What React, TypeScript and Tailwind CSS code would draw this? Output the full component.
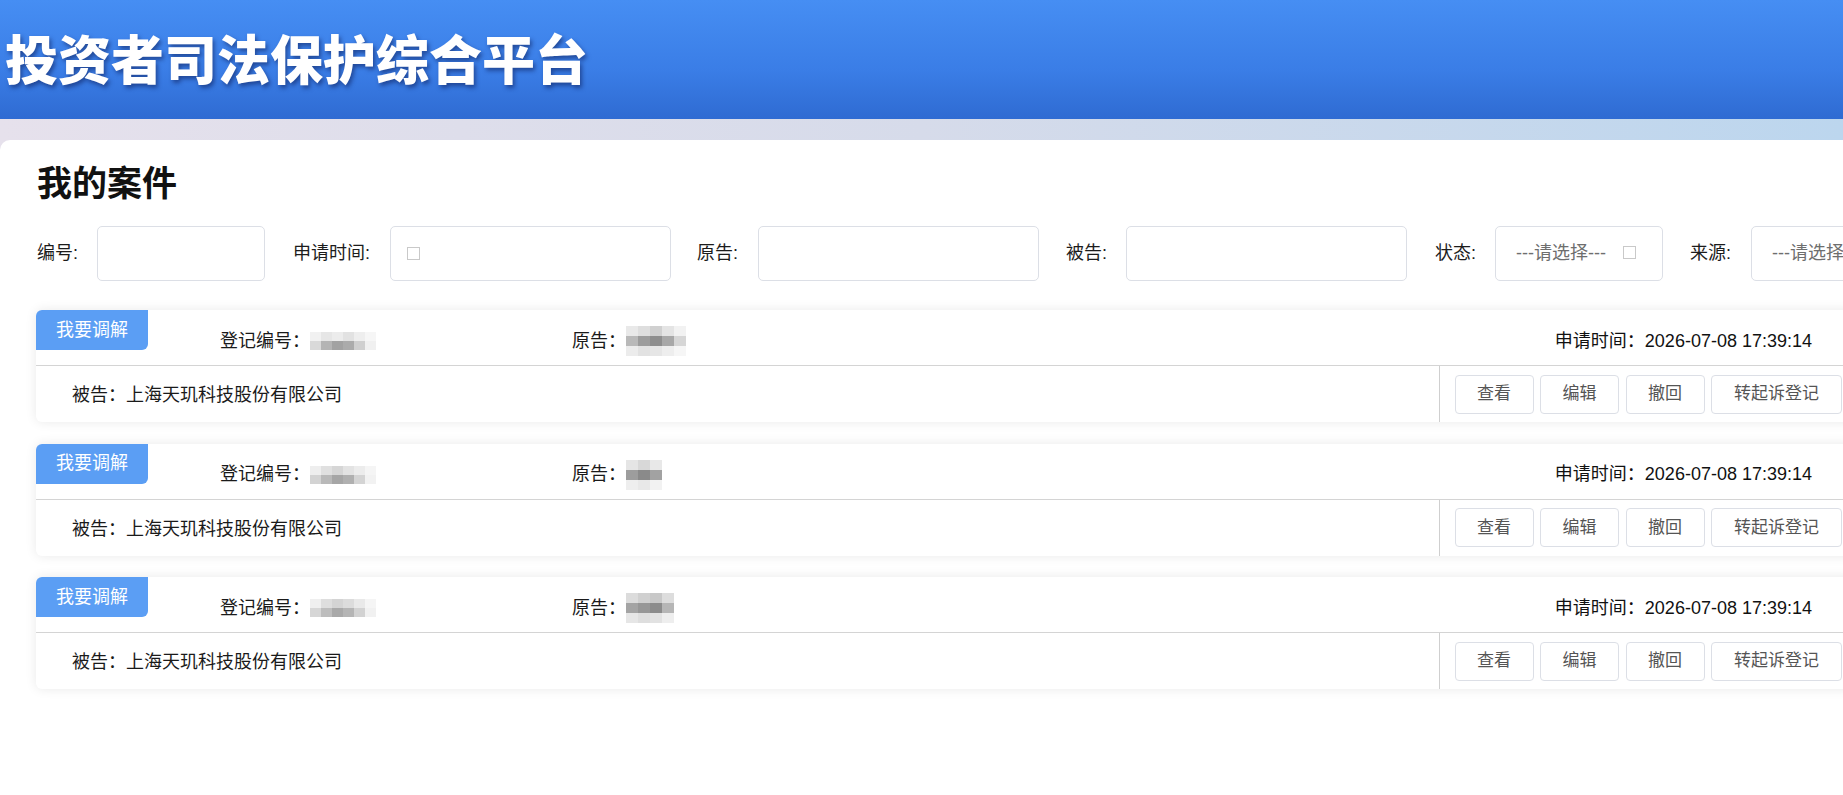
import React from "react";

type Row = string[];

// Pixelated placeholder for masked personal data
function Mosaic({ rows, cell = 11, h = 9 }: { rows: Row[]; cell?: number; h?: number }) {
  return (
    <div className="flex flex-col blur-[0.6px]">
      {rows.map((r, i) => (
        <div key={i} className="flex">
          {r.map((c, j) => (
            <div key={j} style={{ width: cell, height: h, backgroundColor: c }} />
          ))}
        </div>
      ))}
    </div>
  );
}

const regRows: Row[][] = [
  [
    ["#f1f1f1", "#e6e6e6", "#ececec", "#e2e2e2", "#eeeeee", "#f6f6f6"],
    ["#d9d9d9", "#b4b4b4", "#a2a2a2", "#ababab", "#cfcfcf", "#f0f0f0"],
  ],
  [
    ["#eeeeee", "#e0e0e0", "#d6d6d6", "#e3e3e3", "#ececec", "#f5f5f5"],
    ["#d3d3d3", "#b9b9b9", "#a6a6a6", "#b0b0b0", "#d4d4d4", "#f2f2f2"],
  ],
  [
    ["#efefef", "#dedede", "#d4d4d4", "#dcdcdc", "#e9e9e9", "#f5f5f5"],
    ["#d6d6d6", "#bdbdbd", "#a9a9a9", "#b5b5b5", "#d2d2d2", "#f1f1f1"],
  ],
];

const plaintiffRows: Row[][] = [
  [
    ["#e9e9e9", "#dedede", "#d0d0d0", "#e4e4e4", "#f2f2f2"],
    ["#b9b9b9", "#9c9c9c", "#8e8e8e", "#a8a8a8", "#d6d6d6"],
    ["#ececec", "#e2e2e2", "#e6e6e6", "#eeeeee", "#f6f6f6"],
  ],
  [
    ["#e5e5e5", "#d8d8d8", "#e8e8e8"],
    ["#9d9d9d", "#8a8a8a", "#a2a2a2"],
    ["#eeeeee", "#e8e8e8", "#f2f2f2"],
  ],
  [
    ["#dcdcdc", "#d0d0d0", "#c8c8c8", "#dddddd"],
    ["#a4a4a4", "#979797", "#8c8c8c", "#b6b6b6"],
    ["#e6e6e6", "#dedede", "#e2e2e2", "#eeeeee"],
  ],
];

function FieldLabel({ text, w }: { text: string; w: number }) {
  return (
    <span className="text-[18px] text-[#1c1c1c] shrink-0" style={{ width: w }}>
      {text}
    </span>
  );
}

function IconBox() {
  return <span className="inline-block w-[13px] h-[13px] border border-[#c9c9c9] shrink-0" />;
}

function CaseCard({ idx }: { idx: number }) {
  const buttons = ["查看", "编辑", "撤回"];
  return (
    <div className="w-[1820px] h-[112px] bg-white rounded-[6px] shadow-[0_0_12px_rgba(0,0,0,0.09)] flex flex-col shrink-0">
      <div className="h-[56px] flex items-center pt-[7px] border-b border-[#d4d4d4] text-[18px] text-[#1a1a1a]">
        <div className="self-start -mt-[7px] w-[112px] h-[40px] bg-[#5b9ef4] rounded-tl-[6px] rounded-br-[6px] flex items-center justify-center text-white text-[18px] shrink-0">
          我要调解
        </div>
        <div className="ml-[72px] w-[352px] flex items-center shrink-0">
          <span>登记编号：</span>
          <Mosaic rows={regRows[idx]} cell={11} h={9} />
        </div>
        <div className="flex items-center shrink-0">
          <span>原告：</span>
          <Mosaic rows={plaintiffRows[idx]} cell={12} h={10} />
        </div>
        <div className="ml-auto pr-[44px] text-[#111]">申请时间：2026-07-08 17:39:14</div>
      </div>
      <div className="flex-1 flex">
        <div className="flex-1 pl-[36px] pt-[3px] flex items-center text-[18px] text-[#1a1a1a]">
          被告：上海天玑科技股份有限公司
        </div>
        <div className="border-l border-[#cfcfcf] pl-[15px] pr-[14px] flex items-center gap-[6.5px]">
          {buttons.map((b) => (
            <button
              key={b}
              className="w-[79px] h-[39px] border border-[#dcdfe6] rounded-[4px] bg-white text-[17px] text-[#555]"
            >
              {b}
            </button>
          ))}
          <button className="w-[131px] h-[39px] border border-[#dcdfe6] rounded-[4px] bg-white text-[17px] text-[#555]">
            转起诉登记
          </button>
        </div>
      </div>
    </div>
  );
}

export default function App() {
  return (
    <div className="w-[1843px] h-[795px] overflow-hidden bg-white font-['Liberation_Sans','Noto_Sans_CJK_SC',sans-serif]">
      <header className="h-[119px] bg-[linear-gradient(180deg,#468ef3_0%,#3a7de6_60%,#2f6bd2_100%)] flex items-center pl-[5px] pb-[4px]">
        <h1 className="text-[53px] leading-none font-black text-white font-['Noto_Sans_CJK_SC',sans-serif] [text-shadow:2px_3px_4px_rgba(12,30,90,0.55)]">
          投资者司法保护综合平台
        </h1>
      </header>
      <div className="pt-[21px] bg-[linear-gradient(90deg,#e6e1ec_0%,#d6dbea_50%,#bcd6ee_100%)]">
        <main className="bg-white rounded-tl-[10px] h-[660px] pl-[37px] pt-[23px]">
          <h2 className="text-[35px] leading-none font-bold text-[#111] font-['Noto_Sans_CJK_SC',sans-serif]">
            我的案件
          </h2>

          <div className="mt-[28px] flex items-center whitespace-nowrap">
            <FieldLabel text="编号:" w={43} />
            <div className="ml-[17px] mr-[28px] w-[168px] h-[55px] border border-[#dcdfe6] rounded-[5px] shrink-0" />
            <FieldLabel text="申请时间:" w={80} />
            <div className="ml-[17px] mr-[26px] w-[281px] h-[55px] border border-[#dcdfe6] rounded-[5px] shrink-0 flex items-center pl-[16px]">
              <IconBox />
            </div>
            <FieldLabel text="原告:" w={44} />
            <div className="ml-[17px] mr-[27px] w-[281px] h-[55px] border border-[#dcdfe6] rounded-[5px] shrink-0" />
            <FieldLabel text="被告:" w={44} />
            <div className="ml-[16px] mr-[28px] w-[281px] h-[55px] border border-[#dcdfe6] rounded-[5px] shrink-0" />
            <FieldLabel text="状态:" w={44} />
            <div className="ml-[16px] mr-[27px] w-[168px] h-[55px] border border-[#dcdfe6] rounded-[5px] shrink-0 flex items-center pl-[20px] text-[18px] text-[#6e6e6e]">
              <span>---请选择---</span>
              <span className="ml-[17px]"><IconBox /></span>
            </div>
            <FieldLabel text="来源:" w={44} />
            <div className="ml-[17px] w-[168px] h-[55px] border border-[#dcdfe6] rounded-[5px] shrink-0 flex items-center pl-[20px] text-[18px] text-[#6e6e6e]">
              <span>---请选择---</span>
            </div>
          </div>

          <div className="mt-[29px] -ml-[1px] flex flex-col gap-[21.5px]">
            <CaseCard idx={0} />
            <CaseCard idx={1} />
            <CaseCard idx={2} />
          </div>
        </main>
      </div>
    </div>
  );
}
